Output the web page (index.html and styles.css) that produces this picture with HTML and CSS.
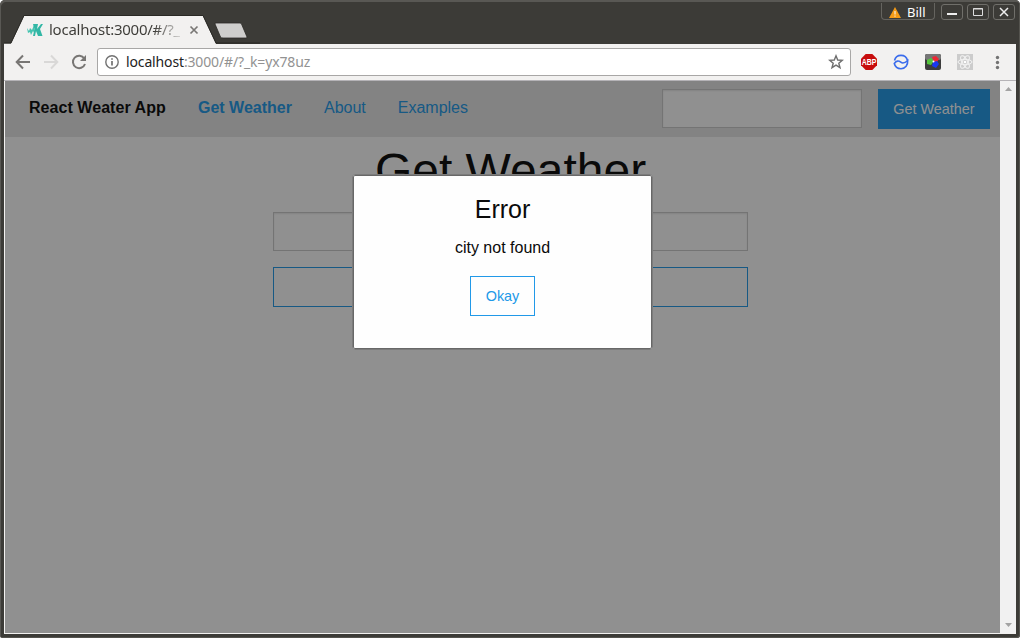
FILE: index.html
```html
<!DOCTYPE html>
<html lang="en">
<head>
<meta charset="utf-8">
<title>React Weater App</title>
<link rel="stylesheet" href="styles.css">
</head>
<body>
<div class="window">
  <header class="titlebar">
    <svg class="tabs" width="260" height="44" viewBox="0 0 260 44">
      <path d="M4 44V43.500H11L24 16H203L216 44Z" fill="#f2f1f0"/>
      <path d="M4 43H11L24 15.500H203L216 43H260" fill="none" stroke="#292824"/>
      <path d="M216 23H240Q241 23 241.500 24L247 37Q247 38 246 38H223Q221 38 220.500 37L215 24Q214.500 23 216 23Z" fill="#cfcecd" stroke="#2b2a26" stroke-width=".8"/>
      <path d="M27 28L29 31L30 28L32 30L34 25L35 34L33 31L31 35L30 32L28 33Z" fill="#45c4b0"/>
      <path d="M33 24H38L37 29L41 24H43L40 29L42.500 36H38L36 31L35 36H33L34.500 29Z" fill="#32b7a5"/>
      <path d="M190.500 26.500L197.500 33.500M197.500 26.500L190.500 33.500" stroke="#797775" stroke-width="1.7"/>
    </svg>
    <span class="tab-title">localhost:3000/#/?_</span>
    <div class="window-controls">
      <div class="profile">
        <svg width="12" height="11" viewBox="0 0 12 11"><path d="M6 0L12 11H0Z" fill="#f49b16"/><path d="M6 4V7.500M6 8.500V9.700" stroke="#fff"/></svg>
        <span>Bill</span>
      </div>
      <div class="control"><svg width="22" height="16"><path d="M6 10H16" stroke="#eee" stroke-width="2"/></svg></div>
      <div class="control"><svg width="22" height="16"><path d="M6.500 4.500H15.500V11.500H6.500ZM6 5H16" fill="none" stroke="#ddd"/></svg></div>
      <div class="control"><svg width="22" height="16"><path d="M7 4L15 12M15 4L7 12" stroke="#eee" stroke-width="1.5"/></svg></div>
    </div>
  </header>

  <div class="toolbar">
    <svg class="nav-icons" width="92" height="36" viewBox="4 44 92 36" fill="none" stroke="#787674" stroke-width="2">
      <path d="M30 62H17M23 55.500L16.700 62L23 68.500"/>
      <path d="M44 62H57M51 55.500L57.300 62L51 68.500" stroke="#d9d8d7"/>
      <path d="M84.300 58.500A6.200 6.200 0 1 0 85 64"/><path d="M86 55V61H80Z" fill="#787674" stroke="none"/>
    </svg>
    <div class="address">
      <svg class="info" width="14" height="14" viewBox="0 0 14 14"><circle cx="7" cy="7" r="6.200" fill="none" stroke="#727272" stroke-width="1.4"/><path d="M7 6V10.500M7 3.300V4.800" stroke="#686868" stroke-width="1.6"/></svg>
      <span class="url"><b>localhost</b>:3000/#/?_k=yx78uz</span>
      <svg class="star" width="16" height="16" viewBox="0 0 16 16"><path d="M8 1.800L9.700 6L14.300 6.300L10.800 9.200L12 13.700L8 11.200L4 13.700L5.200 9.200L1.700 6.300L6.300 6Z" fill="none" stroke="#6f6f6f" stroke-width="1.4"/></svg>
    </div>
    <svg class="extensions" width="150" height="24" viewBox="857 50 150 24">
      <path d="M865.700 54H872.300L877 58.700V65.300L872.300 70H865.700L861 65.300V58.700Z" fill="#c70d0d"/>
      <text class="abp" x="861.700" y="65.200" textLength="14.600" lengthAdjust="spacingAndGlyphs">ABP</text>
      <g fill="none" stroke="#3a6cec" stroke-width="1.6"><path d="M894.500 60.500A6.700 6.700 0 0 1 907.500 60.500"/><path d="M894.300 63.500C896.500 60.500 898.500 60.500 900.800 62.200C903 64 905 63 907.700 60.500C908 65 905.500 68.600 901 68.700C897.500 68.700 895 66.500 894.300 63.500Z"/></g>
      <rect x="925" y="54" width="16" height="16" rx="2" fill="#3c3c3c"/><rect x="925" y="54" width="16" height="6" rx="2" fill="#777"/>
      <path d="M927 60L931 58L934 61L931 65L927 64Z" fill="#54c43b"/><path d="M932 57L936 56L939 59L937 62H934Z" fill="#ed2934"/><path d="M933 62L937 61L939 64L936 68L932 66Z" fill="#1738f1"/><circle cx="933.500" cy="61.500" r="1" fill="#fff"/>
      <rect x="957" y="54" width="16" height="16" fill="#ccc"/>
      <g fill="none" stroke="#f3f3f3"><ellipse cx="965" cy="62" rx="7" ry="2.700"/><ellipse cx="965" cy="62" rx="7" ry="2.700" transform="rotate(60 965 62)"/><ellipse cx="965" cy="62" rx="7" ry="2.700" transform="rotate(120 965 62)"/></g><circle cx="965" cy="62" r="1.300" fill="#fff"/>
      <g fill="#737373"><circle cx="997.500" cy="57.500" r="1.700"/><circle cx="997.500" cy="62.500" r="1.700"/><circle cx="997.500" cy="67.500" r="1.700"/></g>
    </svg>
  </div>

  <div class="viewport">
    <div class="page">
      <nav class="top-bar">
        <span class="brand">React Weater App</span>
        <a class="link active">Get Weather</a>
        <a class="link about">About</a>
        <a class="link">Examples</a>
        <div class="search"><input class="field" type="text"><button class="button">Get Weather</button></div>
      </nav>
      <main class="content">
        <h1 class="title">Get Weather</h1>
        <input class="field wide" type="text">
        <button class="button hollow wide-button"></button>
      </main>
      <div class="overlay">
        <section class="modal">
          <h2 class="modal-title">Error</h2>
          <p class="message">city not found</p>
          <button class="button hollow okay">Okay</button>
        </section>
      </div>
    </div>
    <div class="scrollbar">
      <svg width="7" height="4"><path d="M0 4L3.500 0L7 4Z" fill="#a3a3a3"/></svg>
      <svg width="7" height="4"><path d="M0 0L3.500 4L7 0Z" fill="#a3a3a3"/></svg>
    </div>
  </div>
</div>
</body>
</html>
```
FILE: styles.css
```css
* { box-sizing: border-box; }
body { margin: 0; background: #fff; overflow: hidden; }
svg { display: block; flex: none; }
.window {
  width: 1020px;
  height: 638px;
  padding: 0 4px 4px;
  background: #3c3b37;
  border-radius: 5px 5px 3px 3px;
  box-shadow: inset 1px 2px 0 #595854, inset -1px -1px 0 #55544f;
  display: flex;
  flex-direction: column;
  font-family: "Noto Sans", sans-serif;
}
.titlebar { position: relative; height: 44px; display: flex; justify-content: flex-end; }
.tabs { position: absolute; left: -4px; top: 0; }
.tab-title {
  position: absolute;
  left: 45px;
  top: 19px;
  font-size: 15px;
  line-height: 21px;
  letter-spacing: -.25px;
  color: transparent;
  background: linear-gradient(90deg, #3c3b37 105px, #f2f1f0 137px);
  background-clip: text;
  -webkit-background-clip: text;
}
.window-controls { display: flex; gap: 4px; padding: 4px 1px 0 0; }
.profile {
  width: 54px;
  height: 17px;
  margin: -1px 2px 0 0;
  border: 1px solid #65645f;
  border-top: 0;
  border-radius: 0 0 4px 4px;
  display: flex;
  align-items: center;
  gap: 6px;
  padding: 2px 0 0 7px;
  color: #fff;
  font-size: 13px;
  line-height: 14px;
}
.control { width: 22px; height: 16px; border: 1px solid #706f6a; border-radius: 3px; }
.control svg { margin: -1px; }
.toolbar {
  height: 37px;
  flex: none;
  display: flex;
  background: #f2f1f0;
  border-bottom: 1px solid #b5b3b7;
}
.address {
  width: 754px;
  height: 28px;
  margin: 4px 0 0 1px;
  padding: 0 7px;
  border: 1px solid #a8a7a6;
  border-radius: 3px;
  background: #fff;
  display: flex;
  align-items: center;
}
.url { margin-left: 7px; font-size: 14px; line-height: 20px; letter-spacing: -.14px; color: #929292; flex: 1; }
.url b { font-weight: 400; color: #222; }
.star { margin-right: -1px; }
.extensions { margin: 6px 0 0 6px; }
.abp { font: bold 8.500px "Liberation Sans", sans-serif; fill: #fff; }
.viewport {
  flex: 1;
  display: flex;
  background: #fff;
  border-left: 1px solid #f2f1f0;
  border-bottom: 1px solid #f2f1f0;
}
.page { position: relative; width: 995px; background: #fefefe; font-family: "Liberation Sans", Arial, sans-serif; }
.top-bar { height: 56px; background: #e6e6e6; padding: 8px 10px 8px 24px; display: flex; font-size: 16px; line-height: 37px; }
.brand { width: 169px; font-weight: bold; letter-spacing: .05px; color: #0a0a0a; }
.link { margin-right: 32px; color: #2199e8; }
.active { font-weight: bold; }
.search { margin-left: auto; display: flex; gap: 16px; align-items: flex-start; }
.field {
  width: 200px;
  height: 39px;
  border: 1px solid #cacaca;
  border-radius: 0;
  background: #fefefe;
  box-shadow: inset 0 1px 2px rgba(10, 10, 10, .1);
}
.button {
  width: 112px;
  height: 40px;
  padding: 0;
  border: 1px solid #2199e8;
  background: #2199e8;
  color: #fefefe;
  font: 14.400px "Liberation Sans", Arial, sans-serif;
}
.content { width: 475px; margin-left: 268px; display: flex; flex-direction: column; }
.title { margin: 0 0 8px; font-weight: 400; font-size: 48px; line-height: 67px; text-align: center; color: #0a0a0a; }
.wide { width: 475px; margin-bottom: 16px; }
.hollow { background: transparent; color: #2199e8; }
.wide-button { width: 475px; }
.overlay { position: absolute; inset: 0; padding-top: 93px; background: rgba(10, 10, 10, .45); }
.modal {
  width: 301px;
  height: 176px;
  margin: 0 auto 0 347px;
  border: 1px solid #7c7c7c;
  border-radius: 3px;
  box-shadow: inset 0 0 0 1px #686868;
  background: #fefefe;
  text-align: center;
  color: #0a0a0a;
}
.modal-title { margin: 17px 0 9px; font-size: 25px; font-weight: 400; line-height: 35px; }
.message { margin: 0 0 16px; font-size: 16px; line-height: 24px; }
.okay { width: 65px; }
.scrollbar {
  width: 16px;
  background: #f1f1f1;
  padding: 6px 0;
  display: flex;
  flex-direction: column;
  align-items: center;
  justify-content: space-between;
}
```
